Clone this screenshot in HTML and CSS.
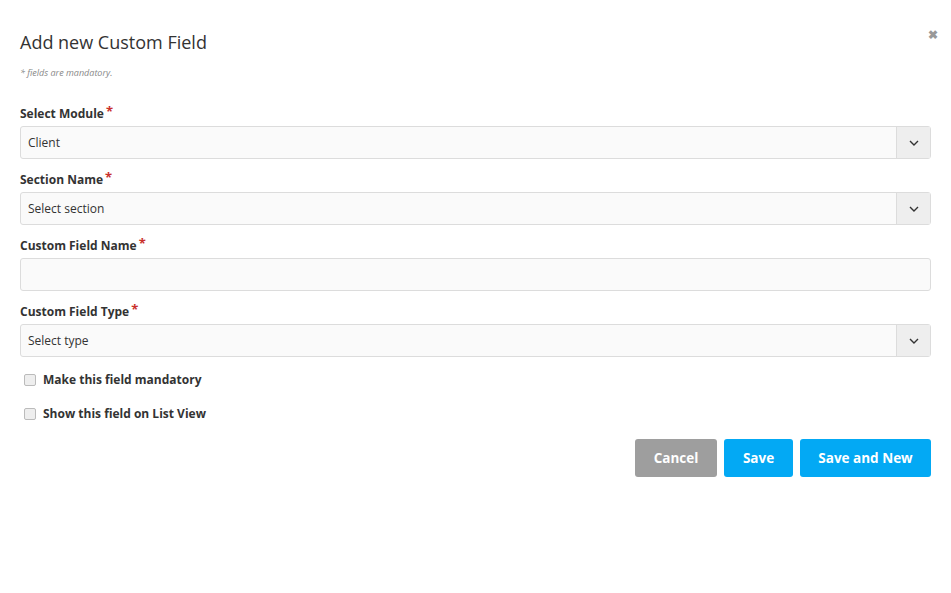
FILE: index.html
```html
<!DOCTYPE html>
<html lang="en">
<head>
  <meta charset="UTF-8">
  <meta name="viewport" content="width=device-width, initial-scale=1.0">
  <title>Add new Custom Field</title>
  <link rel="stylesheet" href="styles.css">
</head>
<body>
  <div class="modal">
    <span class="close">&#10006;</span>
    <h2 class="title">Add new Custom Field</h2>
    <p class="note">* fields are mandatory.</p>
    <form class="form">
      <div class="group">
        <label class="label">Select Module<span class="req">*</span></label>
        <div class="select">
          <span class="value">Client</span>
          <span class="addon"><svg width="10" height="6" viewBox="0 0 10 6"><path d="M1 1l4 4 4-4" fill="none" stroke="#333" stroke-width="1.4"/></svg></span>
        </div>
      </div>
      <div class="group">
        <label class="label">Section Name<span class="req">*</span></label>
        <div class="select">
          <span class="value">Select section</span>
          <span class="addon"><svg width="10" height="6" viewBox="0 0 10 6"><path d="M1 1l4 4 4-4" fill="none" stroke="#333" stroke-width="1.4"/></svg></span>
        </div>
      </div>
      <div class="group">
        <label class="label">Custom Field Name<span class="req">*</span></label>
        <input class="input" type="text">
      </div>
      <div class="group">
        <label class="label">Custom Field Type<span class="req">*</span></label>
        <div class="select">
          <span class="value">Select type</span>
          <span class="addon"><svg width="10" height="6" viewBox="0 0 10 6"><path d="M1 1l4 4 4-4" fill="none" stroke="#333" stroke-width="1.4"/></svg></span>
        </div>
      </div>
      <label class="check"><span class="box"></span>Make this field mandatory</label>
      <label class="check"><span class="box"></span>Show this field on List View</label>
      <div class="actions">
        <button type="button" class="btn btn-grey">Cancel</button>
        <button type="button" class="btn btn-blue">Save</button>
        <button type="button" class="btn btn-blue btn-wide">Save and New</button>
      </div>
    </form>
  </div>
</body>
</html>
```
FILE: styles.css
```css
body {
  margin: 0;
  font-family: "Open Sans", Arial, sans-serif;
  background-color: #fff;
  color: #333;
}
.modal {
  position: relative;
  padding: 29px 20px 20px 20px;
  width: 911px;
}
.close {
  position: absolute;
  top: 26px;
  right: 13px;
  font-size: 12px;
  color: #999;
  font-weight: bold;
}
.title {
  margin: 0;
  font-size: 18px;
  font-weight: 400;
  line-height: 26px;
  color: #333;
}
.note {
  margin: 12px 0 0 0;
  font-size: 9px;
  font-style: italic;
  color: #888;
  line-height: 12px;
}
.form {
  margin-top: 26px;
}
.group {
  margin-bottom: 12px;
}
.label {
  display: block;
  font-size: 12px;
  font-weight: 700;
  line-height: 17px;
  height: 17px;
  margin-bottom: 4px;
  color: #333;
}
.req {
  color: #c9302c;
  margin-left: 2px;
  font-size: 13px;
  line-height: 0;
  vertical-align: 2px;
}
.select {
  display: flex;
  height: 33px;
  box-sizing: border-box;
  border: 1px solid #dcdcdc;
  border-radius: 3px;
  background-color: #fafafa;
}
.value {
  flex: 1;
  font-size: 12px;
  line-height: 31px;
  padding-left: 7px;
  color: #333;
}
.addon {
  width: 33px;
  display: flex;
  align-items: center;
  justify-content: center;
  background-color: #eee;
  border-left: 1px solid #dcdcdc;
}
.input {
  display: block;
  width: 100%;
  height: 33px;
  box-sizing: border-box;
  border: 1px solid #dcdcdc;
  border-radius: 3px;
  background-color: #fafafa;
}
.check {
  display: flex;
  align-items: center;
  font-size: 12px;
  font-weight: 700;
  line-height: 17px;
  padding: 2px 0;
  margin: 0 0 13px 4px;
  color: #333;
}
.box {
  width: 10px;
  height: 10px;
  border: 1px solid #bbb;
  border-radius: 2px;
  background-color: #eee;
  margin-right: 7px;
}
.actions {
  display: flex;
  justify-content: flex-end;
  gap: 7px;
  margin-top: 15px;
}
.btn {
  height: 38px;
  border: none;
  border-radius: 3px;
  color: #fff;
  font-family: "Open Sans", Arial, sans-serif;
  font-size: 13.5px;
  font-weight: 700;
  cursor: pointer;
  padding: 0;
  white-space: nowrap;
}
.btn-grey {
  background-color: #9e9e9e;
  width: 82px;
}
.btn-blue {
  background-color: #03a9f4;
  width: 69px;
}
.btn-wide {
  width: 131px;
}
```
